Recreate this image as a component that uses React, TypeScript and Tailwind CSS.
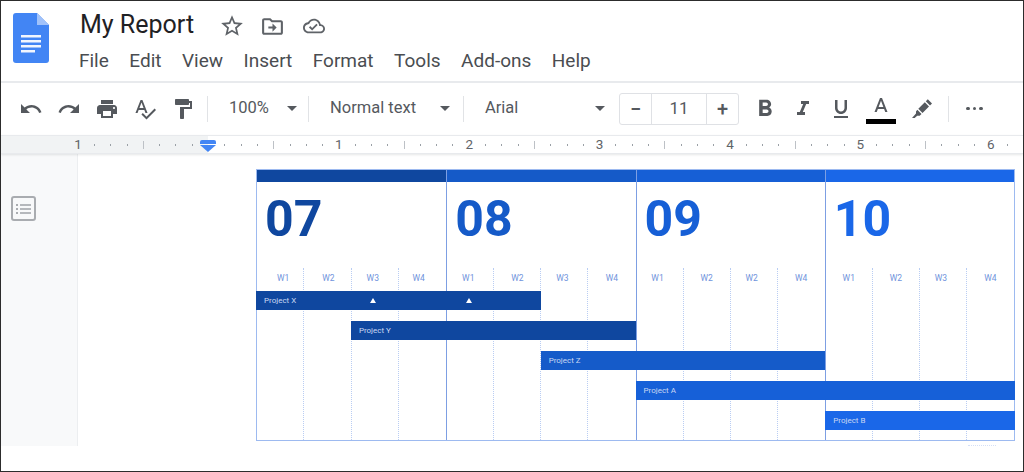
import type { ReactNode } from 'react';

const ROBOTO = "font-['Roboto',sans-serif]";

function Icon({ d, className }: { d: string; className: string }) {
  return (
    <svg viewBox="0 0 24 24" className={className} fill="currentColor">
      <path d={d} />
    </svg>
  );
}

const paths = {
  star: 'M22 9.24l-7.19-.62L12 2 9.19 8.63 2 9.24l5.46 4.73L5.82 21 12 17.27 18.18 21l-1.63-7.03L22 9.24zM12 15.4l-3.76 2.27 1-4.28-3.32-2.88 4.38-.38L12 6.1l1.71 4.04 4.38.38-3.32 2.88 1 4.28L12 15.4z',
  folder: 'M20 6h-8l-2-2H4c-1.1 0-2 .9-2 2v12c0 1.1.9 2 2 2h16c1.1 0 2-.9 2-2V8c0-1.1-.9-2-2-2zm0 12H4V6h5.17l2 2H20v10zm-8-4H8v-2h4V9l4 4-4 4v-3z',
  cloud: 'M19.35 10.04C18.67 6.59 15.64 4 12 4 9.11 4 6.6 5.64 5.35 8.04 2.34 8.36 0 10.91 0 14c0 3.31 2.69 6 6 6h13c2.76 0 5-2.24 5-5 0-2.64-2.05-4.78-4.65-4.96zM19 18H6c-2.21 0-4-1.79-4-4 0-2.05 1.53-3.76 3.56-3.97l1.07-.11.5-.95C8.08 7.14 9.94 6 12 6c2.62 0 4.88 1.86 5.39 4.43l.3 1.5 1.53.11c1.56.1 2.78 1.41 2.78 2.96 0 1.65-1.35 3-3 3zm-9-3.82l-2.09-2.09L6.5 13.5 10 17l6.01-6.01-1.41-1.41z',
  undo: 'M12.5 8c-2.65 0-5.05.99-6.9 2.6L2 7v9h9l-3.62-3.62c1.39-1.16 3.16-1.88 5.12-1.88 3.54 0 6.55 2.31 7.6 5.5l2.37-.78C21.08 11.03 17.15 8 12.5 8z',
  redo: 'M18.4 10.6C16.55 8.99 14.15 8 11.5 8c-4.65 0-8.58 3.03-9.96 7.22L3.9 16c1.05-3.19 4.05-5.5 7.6-5.5 1.95 0 3.73.72 5.12 1.88L13 16h9V7l-3.6 3.6z',
  print: 'M19 8H5c-1.66 0-3 1.34-3 3v6h4v4h12v-4h4v-6c0-1.66-1.34-3-3-3zm-3 11H8v-5h8v5zm3-7c-.55 0-1-.45-1-1s.45-1 1-1 1 .45 1 1-.45 1-1 1zm-1-9H6v4h12V3z',
  spell: 'M12.45 16h2.09L9.43 3H7.57L2.46 16h2.09l1.12-3h5.64l1.14 3zm-6.02-5L8.5 5.48 10.57 11H6.43zm15.16.59l-8.09 8.09L9.83 16l-1.41 1.41 5.09 5.09L23 13l-1.41-1.41z',
  paint: 'M18 4V3c0-.55-.45-1-1-1H5c-.55 0-1 .45-1 1v4c0 .55.45 1 1 1h12c.55 0 1-.45 1-1V6h1v4H9v11c0 .55.45 1 1 1h2c.55 0 1-.45 1-1v-9h8V4h-3z',
  bold: 'M15.6 10.79c.97-.67 1.65-1.77 1.65-2.79 0-2.26-1.75-4-4-4H7v14h7.04c2.09 0 3.71-1.7 3.71-3.79 0-1.52-.86-2.82-2.15-3.42zM10 6.5h3c.83 0 1.5.67 1.5 1.5s-.67 1.5-1.5 1.5h-3v-3zm3.5 9H10v-3h3.5c.83 0 1.5.67 1.5 1.5s-.67 1.5-1.5 1.5z',
  italic: 'M10 4v3h2.21l-3.42 8H6v3h8v-3h-2.21l3.42-8H18V4z',
  underline: 'M12 17c3.31 0 6-2.69 6-6V3h-2.5v8c0 1.93-1.57 3.5-3.5 3.5S8.5 12.93 8.5 11V3H6v8c0 3.31 2.69 6 6 6zm-7 2v2h14v-2H5z',
  textA: 'M11 3L5.5 17h2.25l1.12-3h6.25l1.12 3h2.25L13 3h-2zm-1.38 9L12 5.67 14.38 12H9.62z',
  marker: 'M17.8 2.2l4.2 4.2-2 2-4.2-4.2zM14.8 5.2l4.2 4.2-6.5 6.5-4.2-4.2zM7.3 12.7l4.2 4.2-1.8 1.8H7.2L4.7 21H2l4-4.5v-2z',
};

function Dropdown({ label, width, arrowGap }: { label: string; width: string; arrowGap: string }) {
  return (
    <div className={`flex items-center ${width}`}>
      <span className="text-[16.5px] text-[#55595e]">{label}</span>
      <span className={`${arrowGap} h-0 w-0 border-x-[5.5px] border-t-[5.5px] border-x-transparent border-t-[#55595e]`} />
    </div>
  );
}

function Divider() {
  return <div className="h-[26px] w-px bg-[#e1e3e6]" />;
}

function Ruler() {
  const ticks = Array.from({ length: 58 }, (_, i) => i);
  const label = (i: number): ReactNode => {
    if (i === 8) return null;
    if (i % 8 === 0) return <span className="text-[13.5px] text-[#5f6368]">{i === 0 ? 1 : i / 8 - 1}</span>;
    if (i % 8 === 4) return <span className="h-[8px] w-px bg-[#bdc1c6]" />;
    return <span className="h-[2px] w-px bg-[#9aa0a6]" />;
  };
  return (
    <div className="relative h-[19px] border-y border-[#e8eaed] bg-[linear-gradient(to_right,#f1f3f4_207px,#ffffff_207px)] shadow-[0_1px_2px_rgba(60,64,67,0.12)]">
      <div className="flex h-full items-center pl-[69px]">
        {ticks.map((i) => (
          <div key={i} className="flex h-full w-[16.31px] shrink-0 items-center justify-center">
            {label(i)}
          </div>
        ))}
      </div>
      {/* indent handles */}
      <div className="absolute left-[199px] top-[4px] flex flex-col items-center">
        <div className="h-[4px] w-[16px] rounded-t-[2px] bg-[#4285f4]" />
        <div className="mt-px h-0 w-0 border-x-[8px] border-t-[7px] border-x-transparent border-t-[#4285f4]" />
      </div>
    </div>
  );
}

type Month = { num: string; color: string; weeks: string[]; shift: string[] };

// week labels don't sit quite centred in their cells, hence the per-cell padding
const months: Month[] = [
  { num: '07', color: '#0f479f', weeks: ['W1', 'W2', 'W3', 'W4'], shift: ['pl-[6px]', 'pl-[2px]', 'pr-[4px]', 'pr-[8px]'] },
  { num: '08', color: '#155ac8', weeks: ['W1', 'W2', 'W3', 'W4'], shift: ['pr-[4px]', '', 'pr-[4px]', ''] },
  { num: '09', color: '#165fd6', weeks: ['W1', 'W2', 'W2', 'W4'], shift: ['pr-[4px]', '', 'pr-[4px]', ''] },
  { num: '10', color: '#1a67e8', weeks: ['W1', 'W2', 'W3', 'W4'], shift: ['', '', 'pr-[4px]', ''] },
];

const bars = [
  { name: 'Project X', pos: 'col-start-1 col-span-6', bg: 'bg-[#0f479f]', row: 'row-start-1' },
  { name: 'Project Y', pos: 'col-start-3 col-span-6', bg: 'bg-[#0f479f]', row: 'row-start-2' },
  { name: 'Project Z', pos: 'col-start-7 col-span-6', bg: 'bg-[#155bc9]', row: 'row-start-3' },
  { name: 'Project A', pos: 'col-start-9 col-span-8', bg: 'bg-[#1660d8]', row: 'row-start-4' },
  { name: 'Project B', pos: 'col-start-13 col-span-4', bg: 'bg-[#1a67e8]', row: 'row-start-5' },
];

function Gantt() {
  return (
    <div className={`ml-[178px] mt-[15px] flex w-[759px] flex-col ${ROBOTO}`}>
      <div className="grid h-[272px]">
        {/* month columns with week guides */}
        <div className="col-start-1 row-start-1 grid grid-cols-4 border border-[#9dbaf0]">
          {months.map((m, idx) => (
            <div key={m.num} className={`flex flex-col ${idx > 0 ? 'border-l border-[#7d9fe3]' : ''}`}>
              <div className="h-[12px]" style={{ backgroundColor: m.color }} />
              <div
                className="h-[86px] pl-[8px] pt-[7px] text-[50px] font-bold leading-[61px]"
                style={{ color: m.color }}
              >
                {m.num}
              </div>
              <div className="flex flex-1">
                {m.weeks.map((w, i) => (
                  <div
                    key={i}
                    className={`w-1/4 pt-[5px] text-center text-[8.5px] leading-[10px] text-[#6f93dc] ${m.shift[i]} ${i < 3 ? 'border-r border-dotted border-[#b9cdf3]' : ''}`}
                  >
                    {w}
                  </div>
                ))}
              </div>
            </div>
          ))}
        </div>
        {/* project bars, one per row */}
        <div className="col-start-1 row-start-1 grid auto-rows-[30px] grid-cols-16 pt-[122px]">
          {bars.map((b) => (
            <div key={b.name} className={`${b.pos} ${b.row} flex h-[19px] items-center pl-[8px] text-[8px] text-[#c9d7f3] ${b.bg}`}>
              {b.name}
              {b.name === 'Project X' && (
                <>
                  <span className="ml-[74px] h-0 w-0 border-x-[3px] border-b-[5px] border-x-transparent border-b-white" />
                  <span className="ml-[90px] h-0 w-0 border-x-[3px] border-b-[5px] border-x-transparent border-b-white" />
                </>
              )}
            </div>
          ))}
        </div>
      </div>
      <div className="ml-[712px] mt-[4px] h-px w-[28px] border-t border-dotted border-[#d5e0f7]" />
    </div>
  );
}

export default function App() {
  return (
    <div className={`flex h-[472px] w-[1024px] flex-col overflow-hidden border border-[#2c2c2c] bg-white ${ROBOTO}`}>
      {/* title and menu */}
      <div className="flex h-[82px] shrink-0 border-b-2 border-[#e8eaed]">
        <svg viewBox="0 0 36 50" className="ml-[12px] mt-[12px] h-[50px] w-[36px]">
          <path d="M3 0h21l12 12v35a3 3 0 0 1-3 3H3a3 3 0 0 1-3-3V3a3 3 0 0 1 3-3z" fill="#4285f4" />
          <path d="M24 0l12 12H24z" fill="#a1c2fa" />
          <path d="M8 22h20v2.4H8zM8 27h20v2.4H8zM8 32h20v2.4H8zM8 37h14v2.4H8z" fill="#f1f6fe" />
        </svg>
        <div className="ml-[30px] flex flex-col">
          <div className="mt-[9px] flex items-center pl-px">
            <span className="text-[25px] leading-[28px] text-[#1f2124]">My Report</span>
            <Icon d={paths.star} className="ml-[25px] mt-[3px] h-[26px] w-[26px] text-[#5f6368]" />
            <Icon d={paths.folder} className="ml-[15px] mt-[3px] h-[25px] w-[25px] text-[#5f6368]" />
            <Icon d={paths.cloud} className="ml-[18px] mt-[3px] h-[22px] w-[22px] text-[#5f6368]" />
          </div>
          <div className="mt-[12px] flex gap-[20.5px] text-[19px] leading-[20px] text-[#4a4d51]">
            {['File', 'Edit', 'View', 'Insert', 'Format', 'Tools', 'Add-ons', 'Help'].map((item) => (
              <span key={item}>{item}</span>
            ))}
          </div>
        </div>
      </div>

      {/* toolbar */}
      <div className="flex h-[52px] shrink-0 items-center pb-px text-[#55595e]">
        <div className="ml-[18px] flex items-center gap-[14px]">
          <Icon d={paths.undo} className="h-[24px] w-[24px]" />
          <Icon d={paths.redo} className="h-[24px] w-[24px]" />
          <Icon d={paths.print} className="h-[24px] w-[24px]" />
          <Icon d={paths.spell} className="h-[24px] w-[24px]" />
          <Icon d={paths.paint} className="h-[24px] w-[24px]" />
        </div>
        <div className="ml-[12px]"><Divider /></div>
        <div className="ml-[21px]"><Dropdown label="100%" width="w-[79px]" arrowGap="ml-[18px]" /></div>
        <Divider />
        <div className="ml-[21px]"><Dropdown label="Normal text" width="w-[133px]" arrowGap="ml-[24px]" /></div>
        <Divider />
        <div className="ml-[21px]"><Dropdown label="Arial" width="w-[134px]" arrowGap="ml-[77px]" /></div>
        <div className="flex h-[32px] w-[120px] items-stretch rounded-[3px] border border-[#dfe1e5] text-[#55595e]">
          <div className="flex w-[32px] items-center justify-center border-r border-[#dfe1e5] text-[20px] font-medium">−</div>
          <div className="flex w-[55px] items-center justify-center border-r border-[#dfe1e5] text-[17px]">11</div>
          <div className="flex flex-1 items-center justify-center text-[20px] font-medium">+</div>
        </div>
        <Icon d={paths.bold} className="ml-[12px] h-[28px] w-[28px]" />
        <Icon d={paths.italic} className="ml-[12px] h-[24px] w-[24px]" />
        <Icon d={paths.underline} className="ml-[14px] h-[24px] w-[24px]" />
        <div className="ml-[13px] flex flex-col items-center">
          <Icon d={paths.textA} className="mt-[2px] h-[24px] w-[24px]" />
          <div className="h-[5px] w-[30px] bg-black" />
        </div>
        <Icon d={paths.marker} className="ml-[14px] h-[24px] w-[24px]" />
        <div className="ml-[14px]"><Divider /></div>
        <div className="ml-[17px] flex gap-[3px]">
          <span className="h-[3.5px] w-[3.5px] rounded-full bg-[#55595e]" />
          <span className="h-[3.5px] w-[3.5px] rounded-full bg-[#55595e]" />
          <span className="h-[3.5px] w-[3.5px] rounded-full bg-[#55595e]" />
        </div>
      </div>

      <Ruler />

      {/* page area */}
      <div className="flex h-[292px] shrink-0">
        <div className="flex w-[77px] shrink-0 justify-start border-r border-[#eceef0] bg-[#f8f9fa]">
          <div className="ml-[10px] mt-[42px] flex h-[25px] w-[25px] flex-col items-center justify-center gap-[2px] rounded-[3px] border-2 border-[#a9acb0]">
            {[0, 1, 2].map((row) => (
              <div key={row} className="flex items-center gap-[2px]">
                <span className="h-[2px] w-[2px] bg-[#a9acb0]" />
                <span className="h-[2px] w-[11px] bg-[#b5b8bc]" />
              </div>
            ))}
          </div>
        </div>
        <Gantt />
      </div>
    </div>
  );
}
